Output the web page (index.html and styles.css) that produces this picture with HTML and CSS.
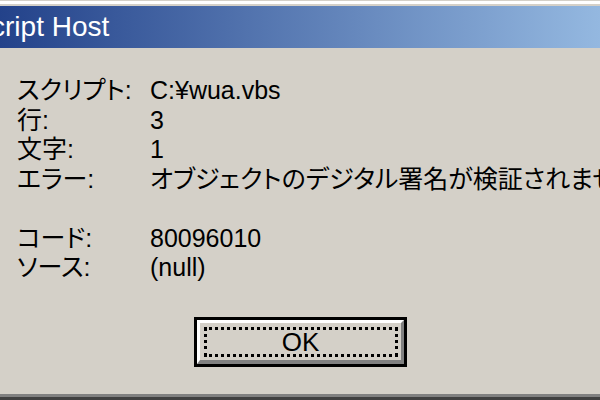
FILE: index.html
```html
<!DOCTYPE html>
<html lang="ja">

<head>
  <meta charset="UTF-8" />
  <title>Windows Script Host</title>
  <link rel="stylesheet" href="styles.css">
</head>

<body>
  <div class="window">
    <header class="titlebar">
      <span class="title">Windows Script Host</span>
    </header>

    <section class="details">
      <div class="row">
        <span class="label">スクリプト:</span>
        <span class="value">C:¥wua.vbs</span>
      </div>
      <div class="row">
        <span class="label">行:</span>
        <span class="value">3</span>
      </div>
      <div class="row">
        <span class="label">文字:</span>
        <span class="value">1</span>
      </div>
      <div class="row">
        <span class="label">エラー:</span>
        <span class="value">オブジェクトのデジタル署名が検証されませんでした。</span>
      </div>
      <div class="row spacer"></div>
      <div class="row">
        <span class="label">コード:</span>
        <span class="value">80096010</span>
      </div>
      <div class="row">
        <span class="label">ソース:</span>
        <span class="value">(null)</span>
      </div>
    </section>

    <div class="actions">
      <button class="ok-button" type="button">
        <span class="ok-face">
          <span class="ok-focus">OK</span>
        </span>
      </button>
    </div>
  </div>
</body>

</html>
```

FILE: styles.css
```css
html,
body {
  height: 100%;
}

body {
  margin: 0;
  background: #d4d0c8;
  color: #000;
  font-family: "Liberation Sans", "Noto Sans CJK JP", sans-serif;
  font-feature-settings: "palt";
  overflow: hidden;
}

.window {
  box-sizing: border-box;
  height: 100%;
  margin-top: 1px;
  padding-top: 2px;
  border-top: 3px solid #ffffff;
  display: flex;
  flex-direction: column;
  box-shadow: inset 0 -4px 0 #404040, inset 0 -7px 0 #808080;
}

.titlebar {
  height: 42px;
  background: linear-gradient(to right, #23428a, #94b8e0);
  color: #fff;
  font-size: 28px;
  line-height: 42px;
  white-space: nowrap;
  overflow: hidden;
}

.title {
  display: inline-block;
  margin-left: -149px;
}

.details {
  margin-top: 28px;
  padding-left: 17px;
  font-size: 25px;
  line-height: 29.5px;
  white-space: nowrap;
}

.row {
  display: flex;
  height: 29.5px;
}

.label {
  width: 133px;
  flex-shrink: 0;
}

.actions {
  display: flex;
  justify-content: center;
  margin-top: 34px;
}

.ok-button {
  box-sizing: border-box;
  width: 213px;
  height: 50px;
  padding: 0;
  border: 3px solid #000;
  background: #d4d0c8;
  font: inherit;
  display: flex;
}

.ok-face {
  flex: 1;
  display: flex;
  padding: 4px 3px 3px 4px;
  border-top: 3px solid #fff;
  border-left: 3px solid #fff;
  border-right: 3px solid #808080;
  border-bottom: 4px solid #808080;
}

.ok-focus {
  flex: 1;
  border: 3px dotted #000;
  font-size: 26px;
  line-height: 24px;
  color: #000;
  display: flex;
  align-items: center;
  justify-content: center;
}
```
